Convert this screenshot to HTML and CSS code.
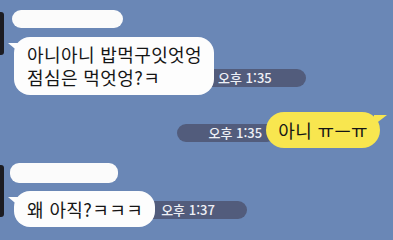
FILE: index.html
```html
<!DOCTYPE html>
<html lang="ko">
<head>
  <meta charset="UTF-8">
  <meta name="viewport" content="width=device-width, initial-scale=1.0">
  <title>채팅</title>
  <link rel="stylesheet" href="styles.css">
</head>
<body>

<div class="chat">

  <div class="group incoming first">
    <div class="avatar"></div>
    <div class="col">
      <div class="name-mask"></div>
      <div class="row">
        <div class="bubble white">
          <p class="line">아니아니 밥먹구잇엇엉</p>
          <p class="line">점심은 먹엇엉?ㅋ</p>
        </div>
        <span class="time time-in t1">오후 1:35</span>
      </div>
    </div>
  </div>

  <div class="group outgoing">
    <span class="time time-out">오후 1:35</span>
    <div class="bubble yellow">아니 ㅠ—ㅠ</div>
  </div>

  <div class="group incoming third">
    <div class="avatar tall"></div>
    <div class="col">
      <div class="name-mask short"></div>
      <div class="row">
        <div class="bubble white">왜 아직?ㅋㅋㅋ</div>
        <span class="time time-in t3">오후 1:37</span>
      </div>
    </div>
  </div>

</div>

</body>
</html>
```

FILE: styles.css
```css
  body {
    margin: 0;
    padding: 0;
    background-color: #6a87b6;
    font-family: "Noto Sans CJK KR", "Noto Sans", sans-serif;
  }

  .chat {
    width: 393px;
    height: 240px;
    overflow: hidden;
    padding-top: 10px;
    box-sizing: border-box;
  }

  .group {
    display: flex;
  }

  .avatar {
    width: 4px;
    height: 43px;
    margin-top: 2px;
    background-color: #1c1c22;
    border-radius: 0 3px 3px 0;
  }

  .avatar.tall {
    height: 52px;
  }

  .col {
    margin-left: 8px;
    display: flex;
    flex-direction: column;
  }

  .name-mask {
    width: 111px;
    height: 18px;
    background-color: #fbfbfb;
    border-radius: 9px;
    margin-bottom: 9px;
  }

  .name-mask.short {
    width: 108px;
    height: 20px;
    margin-left: -2px;
    margin-bottom: 8px;
  }

  .row {
    display: flex;
    align-items: flex-end;
  }

  .bubble {
    position: relative;
    z-index: 1;
    font-size: 18px;
    line-height: 24px;
    letter-spacing: 0.4px;
    color: #151515;
    border-radius: 16px;
    white-space: nowrap;
  }

  .line {
    margin: 0;
    line-height: 23px;
  }

  .bubble.white {
    background-color: #fdfdfd;
    margin-left: 2px;
    padding: 6px 12px 6px 13px;
  }

  .bubble.white::before {
    content: "";
    position: absolute;
    left: -6px;
    top: 6px;
    width: 12px;
    height: 10px;
    background-color: #fdfdfd;
    clip-path: polygon(0 0, 100% 0, 100% 100%);
  }

  .bubble.yellow {
    background-color: #f8e64f;
    padding: 6px 12px 6px 12px;
    border-radius: 18px;
  }

  .bubble.yellow::after {
    content: "";
    position: absolute;
    right: -7px;
    top: 3px;
    width: 13px;
    height: 10px;
    background-color: #f8e64f;
    clip-path: polygon(0 0, 100% 0, 0 100%);
  }

  .time {
    font-size: 13px;
    line-height: 18px;
    font-weight: 500;
    color: #eef0f6;
    background-color: #525c7c;
    border-radius: 9px;
    white-space: nowrap;
  }

  .time-in {
    margin-left: -16px;
    padding: 0 34px 0 20px;
  }

  .t1 {
    margin-bottom: 8px;
  }

  .t3 {
    margin-bottom: 8px;
    padding-right: 32px;
    margin-left: -14px;
  }

  .outgoing {
    justify-content: flex-end;
    align-items: center;
    margin-top: 17px;
    margin-right: 13px;
  }

  .time-out {
    padding: 0 14px 0 32px;
    margin-right: -10px;
    margin-top: 6px;
  }

  .third {
    margin-top: 15px;
  }
```
